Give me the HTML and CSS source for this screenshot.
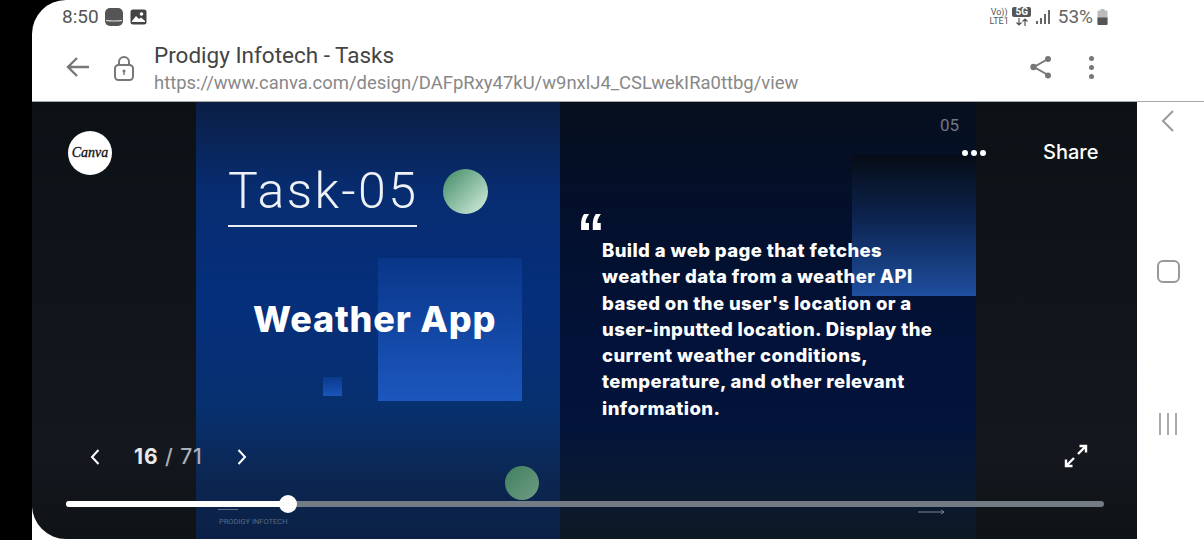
FILE: index.html
```html
<!DOCTYPE html>
<html lang="en">
<head>
    <meta charset="UTF-8">
    <meta name="viewport" content="width=device-width, initial-scale=1.0">
    <title>Prodigy Infotech - Tasks</title>
    <link rel="stylesheet" href="styles.css">
</head>
<body>
    <div class="app">
        <div class="status-bar">
            <div class="status-left">
                <span class="clock">8:50</span>
                <svg class="notif" width="20" height="18" viewBox="0 0 20 18"><path d="M6 0h8a5 5 0 0 1 5 5v8a5 5 0 0 1-5 5H6a5 5 0 0 1-5-5V5a5 5 0 0 1 5-5z" fill="#555"/><path d="M2 12.500q8 1 16 0" fill="none" stroke="#ddd" stroke-width="1.100"/></svg>
                <svg class="notif" width="17" height="16" viewBox="0 0 17 16"><rect x="0.500" y="0.500" width="16" height="15" rx="2.500" fill="#444"/><circle cx="11.500" cy="5" r="1.800" fill="#fff"/><path d="M2 12l4-5 3 3 2-1.500 4 3.500v1H2z" fill="#fff"/></svg>
            </div>
            <div class="status-right">
                <div class="volte"><span>Vo))</span><span>LTE1</span></div>
                <div class="five-g">
                    <span class="five-g-box">5G</span>
                    <svg width="12" height="8" viewBox="0 0 12 8"><path d="M3 0v7M0.500 4.500L3 7l2.500-2.500M9 8V1M6.500 3.500L9 1l2.500 2.500" fill="none" stroke="#555" stroke-width="1.200"/></svg>
                </div>
                <svg width="16" height="16" viewBox="0 0 16 16"><rect x="1" y="12" width="2" height="3" fill="#666"/><rect x="5" y="9" width="2" height="6" fill="#666"/><rect x="9" y="5" width="2" height="10" fill="#666"/><rect x="13" y="1" width="2" height="14" fill="#666"/></svg>
                <span class="battery-text">53%</span>
                <svg width="11" height="16" viewBox="0 0 11 16"><path d="M3.500 0h4v1.500h2a1 1 0 0 1 1 1V15a1 1 0 0 1-1 1h-8a1 1 0 0 1-1-1V2.500a1 1 0 0 1 1-1h2z" fill="#bbb"/><path d="M0.500 8.500h10V15a1 1 0 0 1-1 1h-8a1 1 0 0 1-1-1z" fill="#555"/></svg>
            </div>
        </div>

        <div class="toolbar">
            <svg class="back" width="26" height="24" viewBox="0 0 26 24"><path d="M24 12H3M12 3l-9 9 9 9" fill="none" stroke="#777" stroke-width="2.400"/></svg>
            <svg class="lock" width="22" height="26" viewBox="0 0 22 26"><rect x="2" y="10" width="18" height="15" rx="3.500" fill="none" stroke="#777" stroke-width="2"/><path d="M6 10V7a5 5 0 0 1 10 0v3" fill="none" stroke="#777" stroke-width="2"/><circle cx="11" cy="16" r="1.500" fill="#777"/><rect x="10.300" y="16" width="1.400" height="4" fill="#777"/></svg>
            <div class="page-info">
                <div class="page-title">Prodigy Infotech - Tasks</div>
                <div class="page-url">https://www.canva.com/design/DAFpRxy47kU/w9nxlJ4_CSLwekIRa0ttbg/view</div>
            </div>
            <svg class="share-icon" width="24" height="26" viewBox="0 0 24 26"><path d="M19 5L5 13l14 8" fill="none" stroke="#777" stroke-width="2"/><circle cx="19" cy="5" r="3" fill="#777"/><circle cx="4.500" cy="13" r="3.200" fill="#777"/><circle cx="19" cy="21.500" r="3" fill="#777"/></svg>
            <div class="more-icon"><i></i><i></i><i></i></div>
        </div>

        <div class="main">
            <div class="viewer">
                <div class="slide">
                    <div class="slide-left">
                        <div class="deco-square"></div>
                        <div class="deco-small"></div>
                        <div class="ball ball-top"></div>
                        <div class="ball ball-bottom"></div>
                        <div class="task-title">Task-05</div>
                        <div class="app-title">Weather App</div>
                        <div class="brand-line"></div>
                        <div class="brand">PRODIGY INFOTECH</div>
                    </div>
                    <div class="slide-right">
                        <div class="deco-right"></div>
                        <div class="slide-number">05</div>
                        <div class="quote-mark">“</div>
                        <p class="quote">Build a web page that fetches<br>weather data from a weather API<br>based on the user's location or a<br>user-inputted location. Display the<br>current weather conditions,<br>temperature, and other relevant<br>information.</p>
                        <svg class="slide-arrow" width="28" height="6" viewBox="0 0 28 6"><path d="M0 3h26M23 1l3 2-3 2" fill="none" stroke="#7a8494" stroke-width="1"/></svg>
                    </div>
                </div>

                <div class="canva-logo">Canva</div>
                <div class="viewer-dots"><i></i><i></i><i></i></div>
                <div class="viewer-share">Share</div>

                <div class="pager">
                    <svg width="12" height="18" viewBox="0 0 12 18"><path d="M9.500 2L3 9l6.500 7" fill="none" stroke="#fff" stroke-width="2"/></svg>
                    <span class="pager-text"><b>16</b> / 71</span>
                    <svg width="12" height="18" viewBox="0 0 12 18"><path d="M2.500 2L9 9l-6.500 7" fill="none" stroke="#fff" stroke-width="2"/></svg>
                </div>
                <svg class="fullscreen" width="26" height="26" viewBox="0 0 26 26"><path d="M15 11l8-8M16.500 3H23v6.500M11 15l-8 8M3 16.500V23h6.500" fill="none" stroke="#fff" stroke-width="2.400"/></svg>

                <div class="progress">
                    <div class="progress-fill" style="width: 21%"></div>
                    <div class="progress-knob"></div>
                </div>
            </div>
            <div class="nav-rail">
                <svg width="16" height="24" viewBox="0 0 16 24"><path d="M13 2L3 12l10 10" fill="none" stroke="#999" stroke-width="2"/></svg>
                <div class="nav-home"></div>
                <div class="nav-recents"><i></i><i></i><i></i></div>
            </div>
        </div>
    </div>
</body>
</html>
```

FILE: styles.css
```css
html, body {
    margin: 0;
    padding: 0;
    width: 1204px;
    height: 540px;
    overflow: hidden;
    background-color: #000;
    font-family: 'Roboto', 'Liberation Sans', sans-serif;
}

.app {
    margin-left: 32px;
    width: 1172px;
    height: 540px;
    background-color: #fff;
    border-radius: 34px 0 0 0;
    display: flex;
    flex-direction: column;
    overflow: hidden;
}

.status-bar {
    height: 33px;
    padding: 0 96px 0 30px;
    display: flex;
    justify-content: space-between;
    align-items: center;
}

.status-left, .status-right {
    display: flex;
    align-items: center;
}

.clock {
    font-size: 19px;
    color: #555;
    margin-right: 5px;
}

.notif {
    margin-right: 6px;
}

.status-right {
    gap: 4px;
}

.volte {
    display: flex;
    flex-direction: column;
    align-items: center;
    font-size: 9px;
    line-height: 9px;
    color: #555;
}

.five-g {
    display: flex;
    flex-direction: column;
    align-items: center;
    gap: 1px;
    width: 18px;
}

.five-g-box {
    background-color: #555;
    color: #fff;
    font-size: 10px;
    font-weight: 700;
    line-height: 10px;
    border-radius: 2px;
    padding: 0 3px;
}

.battery-text {
    font-size: 19px;
    color: #666;
    margin-left: 3px;
}

.toolbar {
    height: 68px;
    padding: 0 33px 0 33px;
    display: flex;
    align-items: center;
}

.back {
    margin-right: 22px;
}

.lock {
    margin-right: 19px;
    margin-top: 1px;
}

.page-info {
    flex: 1;
    margin-top: 3px;
}

.page-title {
    font-size: 22.5px;
    line-height: 28px;
    color: #444;
}

.page-url {
    font-size: 18.45px;
    line-height: 26px;
    margin-top: 1px;
    color: #888;
}

.share-icon {
    margin-right: 36px;
}

.more-icon {
    display: flex;
    flex-direction: column;
    gap: 4px;
    margin-right: 77px;
}

.more-icon i {
    width: 5px;
    height: 5px;
    border-radius: 50%;
    background-color: #777;
}

.main {
    display: flex;
    height: 437px;
    border-top: 1px solid #aaa;
}

.viewer {
    position: relative;
    width: 1105px;
    background: linear-gradient(#0c1116, #14181e 80%, #0f1317);
    padding: 0 161px 0 164px;
    box-sizing: border-box;
    border-radius: 0 0 0 34px;
    overflow: hidden;
}

.slide {
    display: flex;
    height: 100%;
}

.slide-left, .slide-right {
    position: relative;
    height: 100%;
}

.slide-left {
    width: 364px;
    background: linear-gradient(#0b1f44 0%, #072c70 20%, #052f7c 45%, #07306f 70%, #0c2753 85%, #0b2045 100%);
}

.slide-right {
    width: 416px;
    background: linear-gradient(#060f1e 0%, #03102e 30%, #02123a 60%, #03143a 75%, #0a1a30 90%, #0d1824 100%);
}

.deco-square {
    position: absolute;
    left: 182px;
    top: 156px;
    width: 144px;
    height: 143px;
    background: linear-gradient(#093689, #1c57be);
}

.deco-small {
    position: absolute;
    left: 127px;
    top: 275px;
    width: 19px;
    height: 19px;
    background: linear-gradient(#0b3a8c, #1a55bb);
}

.ball {
    position: absolute;
    border-radius: 50%;
}

.ball-top {
    left: 247px;
    top: 67px;
    width: 45px;
    height: 45px;
    background: linear-gradient(135deg, #3f8a64, #d7efe0);
}

.ball-bottom {
    left: 309px;
    top: 364px;
    width: 34px;
    height: 34px;
    background: linear-gradient(135deg, #3f7f60, #6f9c83);
}

.task-title {
    position: absolute;
    left: 32px;
    top: 60px;
    width: 189px;
    padding-bottom: 5px;
    border-bottom: 2px solid #e8edf4;
    font-family: 'Roboto', sans-serif;
    font-weight: 300;
    font-size: 50px;
    letter-spacing: 2.4px;
    line-height: 58px;
    color: #eef1f6;
    white-space: nowrap;
}

.app-title {
    position: absolute;
    left: 57px;
    top: 194px;
    font-family: 'Inter', sans-serif;
    font-weight: 800;
    font-size: 36px;
    letter-spacing: 0.8px;
    line-height: 46px;
    color: #fff;
    white-space: nowrap;
}

.brand-line {
    position: absolute;
    left: 22px;
    top: 407px;
    width: 20px;
    height: 1px;
    background-color: #5b6a86;
}

.brand {
    position: absolute;
    left: 23px;
    top: 415px;
    font-size: 7.5px;
    line-height: 9px;
    color: #5b6a86;
    white-space: nowrap;
}

.deco-right {
    position: absolute;
    left: 292px;
    top: 53px;
    width: 124px;
    height: 141px;
    background: linear-gradient(#060c16, #0c2450 45%, #1f4f9f);
}

.slide-number {
    position: absolute;
    right: 17px;
    top: 13px;
    font-size: 17px;
    line-height: 20px;
    color: #6f7884;
}

.quote-mark {
    position: absolute;
    left: 17px;
    top: 103px;
    font-family: 'Liberation Sans', sans-serif;
    font-weight: 700;
    font-size: 56px;
    line-height: 56px;
    color: #fff;
}

.quote {
    position: absolute;
    left: 42px;
    top: 135px;
    margin: 0;
    font-family: 'Inter', sans-serif;
    font-weight: 800;
    font-size: 18.5px;
    letter-spacing: 0.4px;
    line-height: 26.3px;
    color: #fff;
    white-space: nowrap;
}

.slide-arrow {
    position: absolute;
    left: 358px;
    top: 407px;
}

.canva-logo {
    position: absolute;
    left: 36px;
    top: 29px;
    width: 44px;
    height: 44px;
    border-radius: 50%;
    background-color: #fff;
    color: #111;
    font-family: 'Liberation Serif', serif;
    font-style: italic;
    font-size: 14px;
    -webkit-text-stroke: 0.3px #111;
    display: flex;
    align-items: center;
    justify-content: center;
}

.viewer-dots {
    position: absolute;
    left: 930px;
    top: 48px;
    display: flex;
    gap: 3px;
}

.viewer-dots i {
    width: 6px;
    height: 6px;
    border-radius: 50%;
    background-color: #fff;
}

.viewer-share {
    position: absolute;
    left: 1011px;
    top: 37px;
    font-family: 'Inter', sans-serif;
    font-size: 20px;
    line-height: 26px;
    font-weight: 500;
    color: #fff;
}

.pager {
    position: absolute;
    left: 57px;
    top: 342px;
    display: flex;
    align-items: center;
    gap: 33px;
}

.pager-text {
    font-family: 'Inter', sans-serif;
    font-size: 21px;
    font-weight: 500;
    letter-spacing: 0.9px;
    color: #a9b0ba;
}

.pager-text b {
    color: #e8e8e8;
    font-weight: 700;
}

.fullscreen {
    position: absolute;
    left: 1031px;
    top: 341px;
}

.progress {
    position: absolute;
    left: 34px;
    top: 399px;
    width: 1038px;
    height: 6px;
    border-radius: 3px;
    background-color: #737b85;
}

.progress-fill {
    height: 100%;
    border-radius: 3px;
    background-color: #fff;
}

.progress-knob {
    position: absolute;
    left: 213px;
    top: -6px;
    width: 18px;
    height: 18px;
    border-radius: 50%;
    background-color: #fff;
}

.nav-rail {
    flex: 1;
    display: flex;
    flex-direction: column;
    align-items: center;
    margin-top: -2px;
    padding: 9px 5px 0 0;
}

.nav-rail svg {
    margin-bottom: 127px;
}

.nav-home {
    width: 19px;
    height: 19px;
    border: 2px solid #999;
    border-radius: 6px;
    margin-bottom: 130px;
}

.nav-recents {
    display: flex;
    gap: 6px;
}

.nav-recents i {
    width: 2px;
    height: 22px;
    background-color: #aaa;
}
```
